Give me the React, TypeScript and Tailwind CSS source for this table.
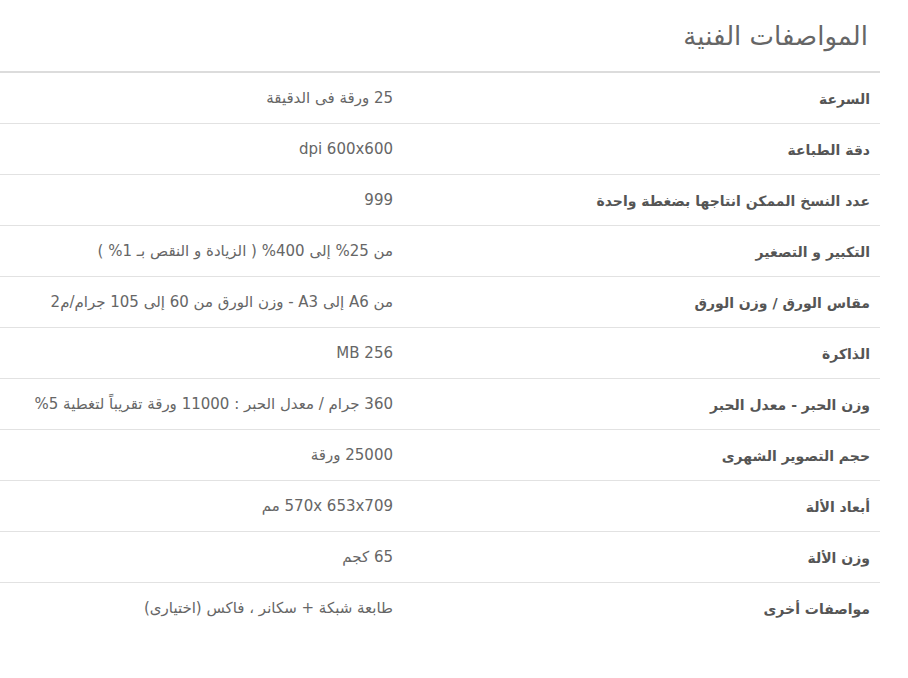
import React from "react";

const specs: [string, string][] = [
  ["السرعة", "25 ورقة فى الدقيقة"],
  ["دقة الطباعة", "dpi 600x600"],
  ["عدد النسخ الممكن انتاجها بضغطة واحدة", "999"],
  ["التكبير و التصغير", "من 25% إلى 400% ( الزيادة و النقص بـ 1% )"],
  ["مقاس الورق / وزن الورق", "من A6 إلى A3 - وزن الورق من 60 إلى 105 جرام/م2"],
  ["الذاكرة", "MB 256"],
  ["وزن الحبر - معدل الحبر", "360 جرام / معدل الحبر : 11000 ورقة تقريباً لتغطية 5%"],
  ["حجم التصوير الشهرى", "25000 ورقة"],
  ["أبعاد الألة", "570x 653x709 مم"],
  ["وزن الألة", "65 كجم"],
  ["مواصفات أخرى", "طابعة شبكة + سكانر ، فاكس (اختيارى)"],
];

export default function App() {
  return (
    <div className="w-[908px] h-[678px] bg-white font-['DejaVu_Sans','Noto_Sans',sans-serif]">
      <div dir="rtl" className="w-[880px]">
        <h2 className="h-[73px] pr-[12px] pt-[18px] text-[26px] leading-[36px] font-normal text-[#666] border-b-2 border-[#dcdcdc]">
          المواصفات الفنية
        </h2>
        {specs.map(([label, value], i) => (
          <div
            key={label}
            className={`flex items-center h-[51px] ${
              i < specs.length - 1 ? "border-b border-[#e2e2e2]" : ""
            }`}
          >
            <div className="w-[477px] pr-[10px] pt-[2px] text-[14px] font-bold text-[#555]">
              {label}
            </div>
            <div className="flex-1 pr-[10px] text-[15px] text-[#666]">{value}</div>
          </div>
        ))}
      </div>
    </div>
  );
}
